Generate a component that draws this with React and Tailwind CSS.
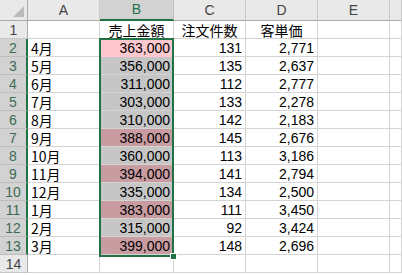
import React from "react";

const rows = [
  ["4月", "363,000", "131", "2,771", "light"],
  ["5月", "356,000", "135", "2,637", ""],
  ["6月", "311,000", "112", "2,777", ""],
  ["7月", "303,000", "133", "2,278", ""],
  ["8月", "310,000", "142", "2,183", ""],
  ["9月", "388,000", "145", "2,676", "pink"],
  ["10月", "360,000", "113", "3,186", ""],
  ["11月", "394,000", "141", "2,794", "pink"],
  ["12月", "335,000", "134", "2,500", ""],
  ["1月", "383,000", "111", "3,450", "pink"],
  ["2月", "315,000", "92", "3,424", ""],
  ["3月", "399,000", "148", "2,696", "pink"],
];

const cols = ["A", "B", "C", "D", "E", ""];
const jp = "font-['Noto_Sans_CJK_JP','Liberation_Sans',sans-serif]";
const num = "font-['Liberation_Sans','Noto_Sans_CJK_JP',sans-serif]";

function Cell({ children, className = "" }) {
  return (
    <div
      className={`h-[18px] flex items-center border-r border-b border-[#d4d4d4] px-[3px] text-[14px] leading-[18px] text-black whitespace-nowrap ${className}`}
    >
      {children}
    </div>
  );
}

function RowHead({ n, sel }) {
  return (
    <div
      className={`h-[18px] flex items-center justify-center text-[14px] leading-[18px] border-b ${num} ${
        sel
          ? "bg-[#d2d2d2] text-[#3d6a52] border-[#bdbdbd] border-r-2 border-r-[#217346]"
          : "bg-[#e9e9e9] text-[#444] border-[#c8c8c8] border-r border-r-[#ababab]"
      }`}
    >
      {n}
    </div>
  );
}

export default function App() {
  return (
    <div className="relative w-[402px] h-[275px] bg-white overflow-hidden">
      <div className="grid grid-cols-[28px_72px_74px_72px_72px_72px_12px]">
        <div className="relative h-[21px] bg-[#e9e9e9] border-r border-b border-[#ababab]">
          <div className="absolute right-[3px] bottom-[3px] w-0 h-0 border-l-[11px] border-l-transparent border-b-[11px] border-b-[#b9b9b9]" />
        </div>
        {cols.map((c, i) => (
          <div
            key={i}
            className={`h-[21px] flex items-center justify-center text-[14px] ${num} ${
              c === "B"
                ? "bg-[#d2d2d2] text-[#217346] border-r border-r-[#c0c0c0] border-b-2 border-b-[#217346]"
                : "bg-[#e9e9e9] text-[#444] border-r border-r-[#c8c8c8] border-b border-b-[#ababab]"
            }`}
          >
            {c}
          </div>
        ))}

        <RowHead n="1" />
        <Cell />
        <Cell className={`justify-center ${jp}`}>売上金額</Cell>
        <Cell className={`justify-center ${jp}`}>注文件数</Cell>
        <Cell className={`justify-center ${jp}`}>客単価</Cell>
        <Cell />
        <Cell />

        {rows.map((r, i) => {
          const [m, s, c, d, kind] = r;
          let bcls = "bg-[#c6c6c6] border-[#c6c6c6]";
          if (kind === "light") bcls = "bg-[#ffc7ce] border-[#ffc7ce] text-[#9c0006]";
          if (kind === "pink") bcls = "bg-[#c99ca2] border-[#c99ca2] text-[#6b0a0f]";
          return (
            <React.Fragment key={i}>
              <RowHead n={i + 2} sel />
              <Cell className={jp}>{m}</Cell>
              <Cell className={`justify-end ${num} ${bcls}`}>{s}</Cell>
              <Cell className={`justify-end ${num}`}>{c}</Cell>
              <Cell className={`justify-end ${num}`}>{d}</Cell>
              <Cell />
              <Cell />
            </React.Fragment>
          );
        })}

        <RowHead n="14" />
        <Cell />
        <Cell />
        <Cell />
        <Cell />
        <Cell />
        <Cell />
      </div>

      <div className="absolute left-[99px] top-[38px] w-[75px] h-[219px] border-2 border-[#217346]" />
      <div className="absolute left-[170px] top-[253px] w-[7px] h-[7px] bg-[#217346] border border-white" />
    </div>
  );
}
